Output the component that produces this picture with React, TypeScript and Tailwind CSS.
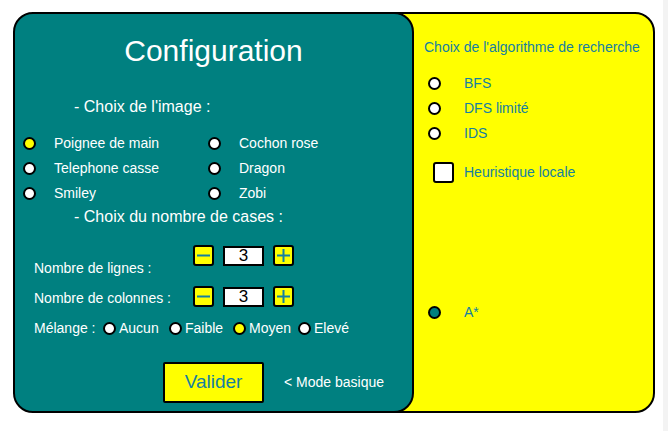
import React from "react";

const Radio = ({ fill }: { fill: string }) => (
  <span className={`inline-block w-[13px] h-[13px] rounded-full border-2 border-black shrink-0 ${fill}`} />
);

const StepBtn = ({ plus }: { plus?: boolean }) => (
  <div className="w-[21px] h-[21px] border-2 border-black rounded-[3px] bg-[#ffff00] flex items-center justify-center shrink-0">
    <svg width="15" height="15" viewBox="0 0 15 15">
      <line x1="1" y1="7.5" x2="14" y2="7.5" stroke="#1580a0" strokeWidth="2" />
      {plus && <line x1="7.5" y1="1" x2="7.5" y2="14" stroke="#1580a0" strokeWidth="2" />}
    </svg>
  </div>
);

const Stepper = () => (
  <div className="flex items-center shrink-0">
    <StepBtn />
    <div className="ml-[9px] w-[41px] h-[20px] border-2 border-black bg-white flex items-center justify-center text-[17px] leading-none text-black">
      3
    </div>
    <div className="ml-[9px]">
      <StepBtn plus />
    </div>
  </div>
);

export default function App() {
  const imgLeft = [
    { label: "Poignee de main", sel: true },
    { label: "Telephone casse" },
    { label: "Smiley" },
  ];
  const imgRight = ["Cochon rose", "Dragon", "Zobi"];
  return (
    <div className="w-[668px] h-[431px] bg-white flex font-['Liberation_Sans',Arial,sans-serif] overflow-hidden">
      <div className="flex-1 flex pl-[13px] pt-[12px]">
        {/* Teal panel */}
        <div className="relative z-10 w-[401px] h-[401px] shrink-0 border-2 border-black rounded-[20px] bg-[#008080] text-white flex flex-col">
          <div className="mt-[17px] h-[40px] leading-[40px] text-[30px] text-center">Configuration</div>
          <div className="mt-[26px] h-[20px] leading-[20px] text-[16px] pl-[59px]">- Choix de l'image :</div>
          <div className="mt-[14px] flex text-[14px]">
            <div className="w-[193px] pl-[8px] flex flex-col">
              {imgLeft.map((o) => (
                <div key={o.label} className="h-[25px] flex items-center">
                  <Radio fill={o.sel ? "bg-[#ffff00]" : "bg-white"} />
                  <span className="ml-[18px]">{o.label}</span>
                </div>
              ))}
            </div>
            <div className="flex flex-col">
              {imgRight.map((l) => (
                <div key={l} className="h-[25px] flex items-center">
                  <Radio fill="bg-white" />
                  <span className="ml-[18px]">{l}</span>
                </div>
              ))}
            </div>
          </div>
          <div className="mt-[1px] h-[20px] leading-[20px] text-[16px] pl-[59px]">- Choix du nombre de cases :</div>
          <div className="mt-[18px] flex items-start pl-[19px] text-[14px]">
            <div className="w-[159px] mt-[13px] h-[20px] leading-[20px]">Nombre de lignes :</div>
            <Stepper />
          </div>
          <div className="mt-[8px] flex items-start pl-[19px] text-[14px]">
            <div className="w-[159px] mt-[2px] h-[20px] leading-[20px]">Nombre de colonnes :</div>
            <Stepper />
          </div>
          <div className="mt-[10px] h-[20px] flex items-center pl-[19px] text-[14px]">
            <span className="w-[69px]">Mélange :</span>
            <span className="w-[66px] flex items-center">
              <Radio fill="bg-white" />
              <span className="ml-[3px]">Aucun</span>
            </span>
            <span className="w-[64px] flex items-center">
              <Radio fill="bg-white" />
              <span className="ml-[3px]">Faible</span>
            </span>
            <span className="w-[65px] flex items-center">
              <Radio fill="bg-[#ffff00]" />
              <span className="ml-[3px]">Moyen</span>
            </span>
            <span className="flex items-center">
              <Radio fill="bg-white" />
              <span className="ml-[3px]">Elevé</span>
            </span>
          </div>
          <div className="mt-[24px] flex items-center pl-[148px]">
            <div className="w-[101px] h-[41px] border-2 border-black rounded-[2px] bg-[#ffff00] flex items-center justify-center text-[19px] text-[#1580a0]">
              Valider
            </div>
            <span className="ml-[20px] text-[14px]">&lt; Mode basique</span>
          </div>
        </div>
        {/* Yellow panel */}
        <div className="ml-[-41px] w-[282px] h-[401px] shrink-0 border-2 border-black rounded-[20px] bg-[#ffff00] text-[#1580a0] text-[14px] flex flex-col pl-[49px]">
          <div className="mt-[23px] h-[20px] leading-[20px]">Choix de l'algorithme de recherche</div>
          <div className="mt-[14px] flex flex-col">
            {["BFS", "DFS limité", "IDS"].map((l) => (
              <div key={l} className="h-[25px] flex items-center pl-[4px]">
                <Radio fill="bg-white" />
                <span className="ml-[23px]">{l}</span>
              </div>
            ))}
          </div>
          <div className="mt-[16px] h-[21px] flex items-center pl-[9px]">
            <span className="w-[21px] h-[21px] border-2 border-black rounded-[3px] bg-white shrink-0" />
            <span className="ml-[10px]">Heuristique locale</span>
          </div>
          <div className="mt-[117px] h-[25px] flex items-center pl-[4px]">
            <Radio fill="bg-[#008080]" />
            <span className="ml-[23px]">A*</span>
          </div>
        </div>
      </div>
      <div className="w-[5px] h-full bg-[#f3f3f3]" />
    </div>
  );
}
